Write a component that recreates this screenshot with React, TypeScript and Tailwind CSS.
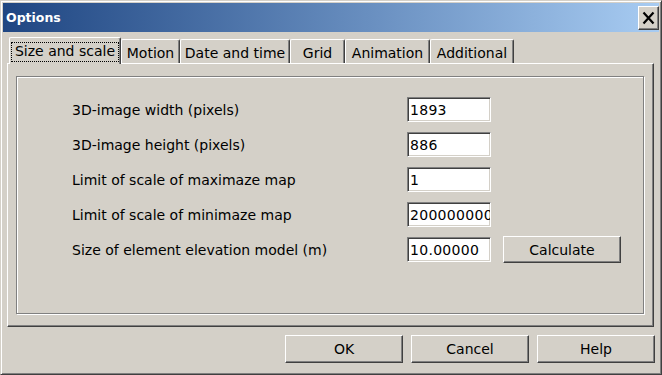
const fields = [
  { label: "3D-image width (pixels)", value: "1893" },
  { label: "3D-image height (pixels)", value: "886" },
  { label: "Limit of scale of maximaze map", value: "1" },
  { label: "Limit of scale of minimaze map", value: "200000000" },
  { label: "Size of element elevation model (m)", value: "10.00000", calc: true },
];

const otherTabs = [
  { label: "Motion", w: "w-[59px]" },
  { label: "Date and time", w: "w-[110px]" },
  { label: "Grid", w: "w-[55px]" },
  { label: "Animation", w: "w-[85px]" },
  { label: "Additional", w: "w-[84px]" },
];

const raised =
  "bg-[#d4d0c8] border border-t-white border-l-white border-r-[#404040] border-b-[#404040] shadow-[inset_-1px_-1px_0_#808080]";

function Button({ label, w }: { label: string; w: string }) {
  return (
    <div className={`${raised} ${w} flex items-center justify-center leading-[16px]`}>
      {label}
    </div>
  );
}

export default function App() {
  return (
    <div className="w-[662px] h-[375px] bg-[#d4d0c8] border border-t-[#d4d0c8] border-l-[#d4d0c8] border-r-[#404040] border-b-[#404040] shadow-[inset_1px_1px_0_#ffffff,inset_-1px_-1px_0_#808080] p-[2px] flex flex-col text-[14px] text-black font-['DejaVu_Sans',sans-serif] select-none overflow-hidden">
      {/* title bar */}
      <div className="h-[29px] shrink-0 flex items-center justify-between pl-[3px] bg-linear-to-r from-[#1f4682] to-[#a8ccf2]">
        <span className="text-white font-bold text-[12.5px] leading-[16px]">Options</span>
        <div className={`${raised} w-[21px] h-[24px] flex items-center justify-center`}>
          <svg width="13" height="14" viewBox="0 0 13 14">
            <path d="M1.5 1.5 L11.5 12.5 M11.5 1.5 L1.5 12.5" stroke="#000" strokeWidth="2.2" fill="none" />
          </svg>
        </div>
      </div>

      {/* tabs */}
      <div className="mt-[5px] ml-[6px] h-[26px] shrink-0 flex items-end">
        <div className="relative z-10 self-start w-[112px] h-[27px] bg-[#d4d0c8] border-t border-l border-r border-t-white border-l-white border-r-[#404040] shadow-[inset_-1px_0_0_#808080] rounded-t-[2px] pt-[4px] px-[1px]">
          <div className="h-[20px] border border-dotted border-black flex items-center justify-center leading-[16px] pb-[2px]">
            Size and scale
          </div>
        </div>
        {otherTabs.map((t) => (
          <div
            key={t.label}
            className={`${t.w} h-[24px] bg-[#d4d0c8] border-t border-l border-r border-t-white border-l-white border-r-[#404040] shadow-[inset_-1px_0_0_#808080] rounded-t-[2px] flex items-center justify-center pt-[2px] leading-[16px] whitespace-nowrap`}
          >
            {t.label}
          </div>
        ))}
      </div>

      {/* tab page */}
      <div className="ml-[4px] w-[647px] h-[264px] shrink-0 border border-t-white border-l-white border-r-[#404040] border-b-[#404040] shadow-[inset_-1px_-1px_0_#808080] pt-[12px] pl-[8px] pr-[9px] pb-[12px] flex">
        <div className="flex-1 border border-[#808080] shadow-[inset_1px_1px_0_#ffffff,1px_1px_0_#ffffff] pt-[20px] pl-[55px] flex flex-col gap-[10px]">
          {fields.map((f) => (
            <div key={f.label} className="h-[25px] flex items-center">
              <div className="w-[335px] leading-[16px] whitespace-nowrap">{f.label}</div>
              <div className="w-[84px] h-[25px] bg-white border border-t-[#808080] border-l-[#808080] border-r-white border-b-white shadow-[inset_1px_1px_0_#404040,inset_-1px_-1px_0_#d4d0c8] pl-[2px] flex items-center overflow-hidden whitespace-nowrap leading-[16px] tracking-[0.3px]">
                {f.value}
              </div>
              {f.calc && (
                <div className={`${raised} ml-[12px] w-[118px] h-[27px] shrink-0 flex items-center justify-center leading-[16px]`}>
                  Calculate
                </div>
              )}
            </div>
          ))}
        </div>
      </div>

      {/* dialog buttons */}
      <div className="mt-[8px] h-[28px] shrink-0 flex justify-end gap-[8px] pr-[4px]">
        <Button label="OK" w="w-[118px]" />
        <Button label="Cancel" w="w-[118px]" />
        <Button label="Help" w="w-[118px]" />
      </div>
    </div>
  );
}
